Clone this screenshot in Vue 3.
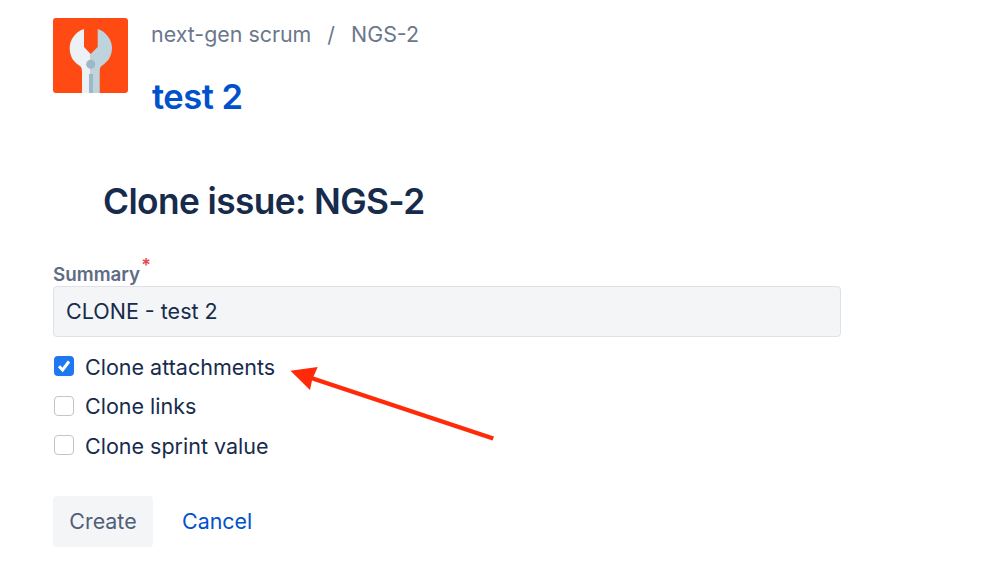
<script setup>
const options = [
  { label: 'Clone attachments', checked: true },
  { label: 'Clone links', checked: false },
  { label: 'Clone sprint value', checked: false },
]
</script>

<template>
  <div class="page">
    <header class="head">
      <svg class="logo" viewBox="0 0 75 75" width="75" height="75" aria-hidden="true">
        <rect width="75" height="75" rx="3" fill="#ff4a14" />
        <path d="M31 11 C22 14 16.7 22 16.7 30 C16.7 40 22 45 27 48 C28.5 49 29 51 29 54 V75 H37.7 V36 L31 29 Z" fill="#ecf1f5" />
        <path d="M44.7 11 C53.5 14 59 22 59 30 C59 40 53 45 48.5 48 C47 49 46.7 51 46.7 54 V75 H37.7 V36 L44.7 29 Z" fill="#bfd3dd" />
        <circle cx="37.7" cy="46.3" r="4.5" fill="#9db8c7" />
        <rect x="36" y="56" width="4" height="19" fill="#9db8c7" />
      </svg>
      <div class="head-text">
        <div class="crumbs"><span>next-gen scrum</span><span class="sep">/</span><span>NGS-2</span></div>
        <a class="issue">test 2</a>
      </div>
    </header>

    <h1 class="title">Clone issue: NGS-2</h1>

    <div class="label">Summary<span class="req">*</span></div>
    <div class="field">CLONE - test 2</div>

    <ul class="opts">
      <li v-for="o in options" :key="o.label" class="opt">
        <span class="box" :class="{ on: o.checked }">
          <svg v-if="o.checked" viewBox="0 0 20 20" width="20" height="20" aria-hidden="true">
            <path d="M5 10.2 L8.6 14 L15 5.5" fill="none" stroke="#fff" stroke-width="3" />
          </svg>
        </span>
        <span>{{ o.label }}</span>
      </li>
    </ul>

    <div class="actions">
      <span class="btn">Create</span>
      <a class="cancel">Cancel</a>
    </div>

    <svg class="arrow" viewBox="0 0 999 584" width="999" height="584" aria-hidden="true">
      <path d="M290.5 370.7 L317.7 367 L313.5 376.5 L494 436.5 L492.5 440.5 L312 380.5 L310 390 Z" fill="#ff2a0a" />
    </svg>
  </div>
</template>

<style>
html, body { margin: 0; background: #fff; }
</style>

<style scoped>
.page {
  position: relative;
  width: 999px;
  height: 584px;
  overflow: hidden;
  box-sizing: border-box;
  padding: 18px 0 0 53px;
  font-family: Inter, "Liberation Sans", sans-serif;
  color: #172b4d;
}
.head { display: flex; gap: 23px; height: 107px; }
.logo { display: block; }
.head-text { display: flex; flex-direction: column; }
.crumbs {
  display: flex;
  gap: 16px;
  font-size: 21.4px;
  line-height: 32px;
  color: #6b778c;
}
.issue {
  margin: 23px 0 0 1px;
  font-size: 34.5px;
  line-height: 48px;
  font-weight: 600;
  letter-spacing: -0.5px;
  color: #0052cc;
}
.title {
  margin: 52px 0 0 50px;
  font-size: 35.3px;
  line-height: 50px;
  font-weight: 600;
  letter-spacing: -0.6px;
  color: #172b4d;
}
.label {
  margin-top: 36px;
  height: 23px;
  line-height: 24px;
  font-size: 18.8px;
  font-weight: 600;
  color: #5e6c84;
}
.req {
  color: #e5484d;
  position: relative;
  top: -9px;
  left: 1px;
  font-size: 18px;
  line-height: 0;
}
.field {
  box-sizing: border-box;
  width: 788px;
  height: 51px;
  padding: 0 12px 2px;
  display: flex;
  align-items: center;
  background: #f4f5f7;
  border: 1px solid #dfe1e6;
  border-radius: 4px;
  font-size: 21.5px;
}
.opts { list-style: none; margin: 10px 0 0; padding: 0; }
.opt {
  display: flex;
  align-items: center;
  gap: 11px;
  height: 39.5px;
  font-size: 21.5px;
}
.box {
  box-sizing: border-box;
  width: 20px;
  height: 20px;
  margin: -1px 0 0 1px;
  border: 1.5px solid #c4c4c4;
  border-radius: 4px;
  background: #fff;
  display: flex;
  align-items: center;
  justify-content: center;
}
.box.on { background: #1e78f0; border: none; }
.actions { display: flex; align-items: center; gap: 29px; margin-top: 30px; }
.btn {
  width: 100px;
  height: 51px;
  display: flex;
  align-items: center;
  justify-content: center;
  background: #f4f5f7;
  border-radius: 4px;
  font-size: 21.4px;
  color: #505f79;
}
.cancel { font-size: 21.4px; color: #0052cc; }
.arrow { position: absolute; left: 0; top: 0; pointer-events: none; }
</style>
